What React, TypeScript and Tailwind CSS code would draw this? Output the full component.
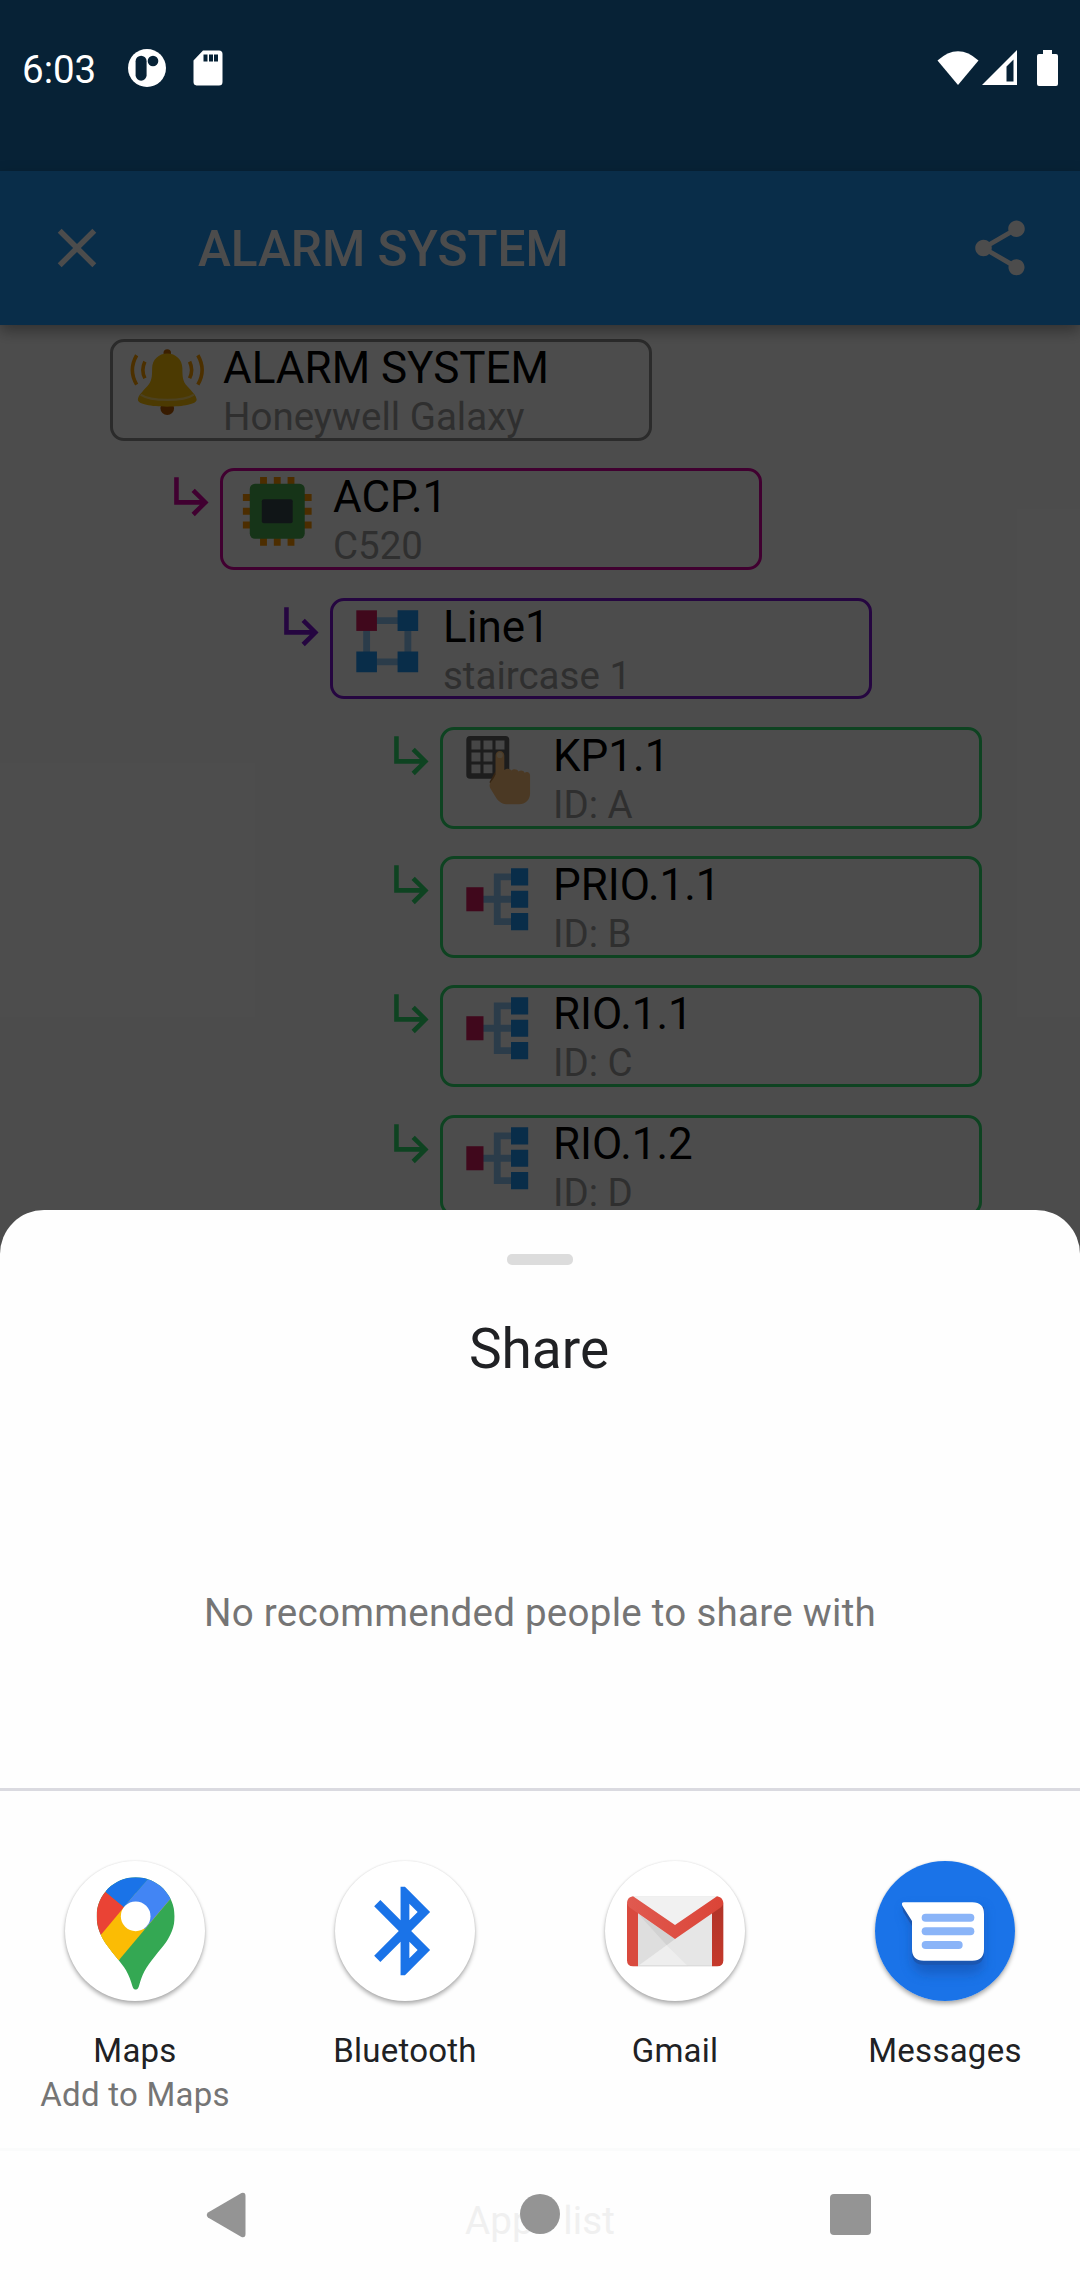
import React from "react";

type Node = {
  title: string;
  sub: string;
  icon: React.ReactNode;
  indent: string;
  border: string;
  arrow?: string;
};

function BellIcon() {
  return (
    <svg viewBox="0 0 48 48" className="size-full">
      <g fill="none" stroke="#FFA000" strokeWidth="2.1">
        <path d="M6.2 8.3Q1.2 17 6.2 25.4M11 12Q8.6 16.9 11 21.7M41.800 8.3Q46.800 17 41.800 25.4M37 12Q39.4 16.9 37 21.7" />
      </g>
      <circle cx="24" cy="7" r="2.2" fill="#C56A00" />
      <circle cx="24" cy="39" r="4" fill="#B95A00" />
      <path
        fill="#FFC107"
        d="M24 7.2c-4.9 0-8.8 3.6-8.8 8.6 0 5-.2 7.6-2.7 10.4C10 29 6.9 31.800 6.9 34.200 6.900 36.700 14.500 38.200 24 38.200s17.100-1.500 17.100-4c0-2.400-3.100-5.200-5.600-8-2.500-2.800-2.700-5.400-2.700-10.400 0-5-3.900-8.600-8.800-8.600z"
      />
      <path d="M8.500 31.200Q13 34.300 24 34.300T39.500 31.200" fill="none" stroke="#FFDB6B" strokeWidth="1.300" />
    </svg>
  );
}

function ChipIcon() {
  return (
    <svg viewBox="0 0 48 48" className="size-full">
      <path
        fill="#FF9800"
        d="M14 4h4v40h-4zM22 4h4v40h-4zM30 4h4v40h-4zM4 14h40v4H4zM4 22h40v4H4zM4 30h40v4H4z"
      />
      <rect x="8" y="8" width="32" height="32" rx="3" fill="#4CAF50" />
      <rect x="15" y="17" width="18" height="14" rx="1.200" fill="#37474F" />
    </svg>
  );
}

function LineIcon() {
  return (
    <svg viewBox="0 0 48 48" className="size-full">
      <path fill="#90CAF9" d="M10 10h28v28H10zM14 14v20h20V14z" fillRule="evenodd" />
      <path fill="#2196F3" d="M30 6h12v12H30zM6 30h12v12H6zM30 30h12v12H30z" />
      <path fill="#D81B60" d="M6 6h12v12H6z" />
    </svg>
  );
}

function KeypadIcon() {
  return (
    <svg viewBox="0 0 48 48" className="size-full">
      <rect x="6" y="4" width="25" height="25" rx="2.200" fill="#616161" />
      <path
        fill="#ECECEC"
        d="M9 6.700h5.200v5.200H9zM16 6.700h5.200v5.200H16zM23 6.700h5.200v5.200H23zM9 13.700h5.200v5.200H9zM16 13.700h5.200v5.200H16zM9 20.600h5.200v5.200H9zM16 20.600h5.200v5.200H16z"
      />
      <path fill="#B07840" d="M23 24.500l-3.600 6.500 3.600 3z" />
      <path
        fill="#FCC078"
        d="M23 15.300a2.550 2.550 0 0 1 5.100 0V24c1-1.200 3.300-1.200 4.100.2 1.200-1.200 3.400-1 4.200.5 1.300-1 3-.5 3.500.8 1.400-1 3.200-.3 3.200 1.500v10.500c0 3.700-2.800 6.300-6.300 6.300h-6.600c-3 0-5.200-1.300-6.800-3.700l-3.300-5.300c-.7-1.300-.9-2.600.2-3.900.9-1.200 2-2.500 2.700-4.400z"
      />
      <circle cx="25.500" cy="15.200" r="1.700" fill="#FFE0B2" />
    </svg>
  );
}

function TreeIcon() {
  return (
    <svg viewBox="0 0 48 48" className="size-full">
      <path fill="#90CAF9" d="M22 9h11v4h-7v9h7v4h-7v9h7v4H22V26h-7v-4h7z" />
      <path fill="#2196F3" d="M32 6h10v10H32zM32 19h10v10H32zM32 32h10v10H32z" />
      <path fill="#D81B60" d="M6 17h10v14H6z" />
    </svg>
  );
}

const nodes: Node[] = [
  { title: "ALARM SYSTEM", sub: "Honeywell Galaxy", icon: <BellIcon />, indent: "pl-[110px]", border: "border-[#8f8f8f]" },
  { title: "ACP.1", sub: "C520", icon: <ChipIcon />, indent: "pl-[165px]", border: "border-[#d800a0]", arrow: "text-[#d800a0]" },
  { title: "Line1", sub: "staircase 1", icon: <LineIcon />, indent: "pl-[275px]", border: "border-[#7e14d8]", arrow: "text-[#7e14d8]" },
  { title: "KP1.1", sub: "ID: A", icon: <KeypadIcon />, indent: "pl-[385px]", border: "border-[#2fe070]", arrow: "text-[#2fe070]" },
  { title: "PRIO.1.1", sub: "ID: B", icon: <TreeIcon />, indent: "pl-[385px]", border: "border-[#2fe070]", arrow: "text-[#2fe070]" },
  { title: "RIO.1.1", sub: "ID: C", icon: <TreeIcon />, indent: "pl-[385px]", border: "border-[#2fe070]", arrow: "text-[#2fe070]" },
  { title: "RIO.1.2", sub: "ID: D", icon: <TreeIcon />, indent: "pl-[385px]", border: "border-[#2fe070]", arrow: "text-[#2fe070]" },
];

function NodeRow({ node }: { node: Node }) {
  return (
    <div className={`flex items-start ${node.indent}`}>
      {node.arrow && (
        <svg viewBox="0 0 24 24" fill="currentColor" className={`size-[55px] shrink-0 ${node.arrow}`}>
          <path d="M19 15l-6 6-1.420-1.420L15.170 16H4V4h2v10h9.170l-3.590-3.580L13 9l6 6z" />
        </svg>
      )}
      <div className={`flex h-[101.75px] w-[542px] shrink-0 rounded-[14px] border-[3px] ${node.border}`}>
        <div className="mt-[-1px] ml-[12.5px] size-[82.5px] shrink-0">{node.icon}</div>
        <div className="ml-[15px] whitespace-nowrap">
          <div className="text-[44px] leading-[52px] text-black">{node.title}</div>
          <div className="text-[38.5px] leading-[46px] text-[#9e9e9e]">{node.sub}</div>
        </div>
      </div>
    </div>
  );
}

function StatusBar() {
  return (
    <div className="absolute inset-x-0 top-0 flex h-[135px] items-center justify-between pl-[22px] pr-[22px] text-white">
      <div className="flex items-center">
        <span className="w-[106px] text-[38.5px] leading-[46px] mt-[4px]">6:03</span>
        <svg viewBox="0 0 38 38" className="size-[38px]">
          <circle cx="19" cy="19" r="19" fill="#fff" />
          <rect x="7.600" y="6.700" width="11" height="25" rx="5.500" fill="#072236" />
          <circle cx="25" cy="12" r="5.300" fill="#072236" />
        </svg>
        <svg viewBox="0 0 30 36" className="ml-[27px] h-[36px] w-[30px]">
          <path d="M10 .5h16a3.500 3.500 0 0 1 3.500 3.500v28a3.500 3.500 0 0 1-3.500 3.500H3.500A3.500 3.500 0 0 1 .5 32V10.500z" fill="#fff" />
          <path d="M10.500 4.500h4v7h-4zM16 4.500h4v7h-4zM21 4.500h4v7h-4z" fill="#072236" />
        </svg>
      </div>
      <div className="flex items-center">
        <svg viewBox="0 0 42 34" className="h-[34px] w-[42px]">
          <path d="M.5 9.500Q21-9 41.500 9.500L21 34z" fill="#fff" />
        </svg>
        <svg viewBox="0 0 35 35" className="ml-[3px] h-[35px] w-[35px]">
          <path fillRule="evenodd" d="M35 0v35H0zM31.500 9.500L24.500 16.500V31.500h7z" fill="#fff" />
        </svg>
        <svg viewBox="0 0 21 36" className="ml-[20px] h-[36px] w-[21px]">
          <path d="M6 0h9v4h4a2 2 0 0 1 2 2v28a2 2 0 0 1-2 2H2a2 2 0 0 1-2-2V6a2 2 0 0 1 2-2h4z" fill="#fff" />
        </svg>
      </div>
    </div>
  );
}

function AppBar() {
  return (
    <div className="relative z-10 flex h-[154px] items-center bg-[#2196f3] pl-[44px] pr-[47px] text-white shadow-[0_6px_14px_rgba(0,0,0,0.35)]">
      <svg viewBox="0 0 24 24" fill="currentColor" className="size-[66px]">
        <path d="M19 6.410L17.590 5 12 10.590 6.410 5 5 6.410 10.590 12 5 17.590 6.410 19 12 13.410 17.590 19 19 17.590 13.410 12z" />
      </svg>
      <div className="mt-[2px] ml-[88px] flex-1 text-[49.5px] leading-[60px] font-medium">ALARM SYSTEM</div>
      <svg viewBox="0 0 24 24" fill="currentColor" className="size-[66px]">
        <path d="M18 16.080c-.760 0-1.440.300-1.960.770L8.910 12.700c.050-.230.090-.460.090-.700s-.040-.470-.090-.700l7.050-4.110c.540.500 1.250.810 2.040.810 1.660 0 3-1.340 3-3s-1.340-3-3-3-3 1.340-3 3c0 .240.040.470.090.700L8.040 9.810C7.500 9.310 6.790 9 6 9c-1.660 0-3 1.340-3 3s1.340 3 3 3c.790 0 1.500-.310 2.040-.810l7.120 4.160c-.050.210-.080.430-.080.650 0 1.610 1.310 2.920 2.920 2.920s2.920-1.310 2.920-2.920-1.310-2.920-2.920-2.920z" />
      </svg>
    </div>
  );
}

function MapsIcon() {
  return (
    <svg viewBox="195 242 420 420" className="size-full">
      <defs>
        <clipPath id="pin">
          <path d="M407 291C472 291 524 343 524 408C524 440 512 468 492 494C468 524 440 556 428 584C422 598 420 607 417 617Q414 628 407 628Q400 628 397 617C392 601 388 588 378 570C366 549 340 522 321 495C302 468 290 442 290 408C290 343 343 291 407 291Z" />
        </clipPath>
      </defs>
      <g clipPath="url(#pin)">
        <path fill="#34A853" d="M280 280h260v360H280z" />
        <path fill="#FBBC04" d="M303 463L407 339L511 356L357 539L280 560z" />
        <path fill="#EA4335" d="M318 336L407 408L303 463.500L270 500V300z" />
        <path fill="#FBBC04" d="M303 463L373 379.500L420 420L357 539L290 540z" />
        <path fill="#1A73E8" d="M318 336L300 280H460L442 298L371 380z" />
        <path fill="#4285F4" d="M442 298L371 380L434 447L511 356L540 320V270z" />
      </g>
      <circle cx="407" cy="408" r="44.500" fill="#fff" />
    </svg>
  );
}

function BluetoothIcon() {
  return (
    <svg viewBox="195 242 420 420" className="size-full">
      <path
        transform="translate(246.500 292.400) scale(13.200 13.300)"
        fill="#1A73E8"
        d="M17.710 7.710L12 2h-1v7.590L6.410 5 5 6.410 10.590 12 5 17.590 6.410 19 11 14.410V22h1l5.710-5.710-4.300-4.290 4.300-4.290zM13 5.830l1.880 1.880L13 9.590V5.830zm1.880 10.460L13 18.170v-3.760l1.880 1.880z"
      />
    </svg>
  );
}

function GmailIcon() {
  return (
    <svg viewBox="195 242 420 420" className="size-full">
      <defs>
        <linearGradient id="flap" x1="0" x2="1">
          <stop offset="0" stopColor="#E05A50" />
          <stop offset="1" stopColor="#DB4437" />
        </linearGradient>
        <linearGradient id="side" x1="0" x2="0" y1="0" y2="1">
          <stop offset="0" stopColor="#B03428" />
          <stop offset="1" stopColor="#C5392B" />
        </linearGradient>
      </defs>
      <path fill="#E6E6E6" d="M278 348H533V558H278z" />
      <path fill="#F1F1F1" d="M278 348H533L405 434z" />
      <path fill="#DEDEDE" d="M294 400L380 495L294 556z" />
      <path fill="#D2D2D2" d="M294 400L405 476L380 495z" />
      <path fill="#EEEEEE" d="M380 495L444 558H294z" />
      <path fill="#D9D9D9" d="M294 555H516V558H294z" />
      <path fill="#D94A3E" d="M261 368L294 385V558H279Q261 558 261 540z" />
      <path fill="url(#side)" d="M550 368L516 385V558H532Q550 558 550 540z" />
      <path fill="url(#flap)" d="M261 366Q263 350 279 348L405 434L531 348Q547 350 550 366Q550 376 543 381L405 476L268 381Q261 376 261 366z" />
    </svg>
  );
}

function MessagesIcon() {
  return (
    <svg viewBox="195 242 420 420" className="size-full">
      <defs>
        <filter id="soft" x="-50%" y="-50%" width="200%" height="200%">
          <feGaussianBlur stdDeviation="18" />
        </filter>
      </defs>
      <circle cx="405" cy="452" r="210" fill="#1A73E8" />
      <path filter="url(#soft)" opacity="0.550" fill="#174EA6" d="M282 385H520V560Q500 580 480 580H345Q306 575 306 530V440z" />
      <path fill="#1B56B0" d="M276 376L280 395L306 437V517Q306 553 341 553H487Q522 553 522 517V380z" />
      <path fill="#fff" d="M282 366H487Q522 366 522 401V506Q522 541 487 541H341Q306 541 306 506V422L277 376Q273 366 282 366z" />
      <g fill="#8AB4F8">
        <rect x="335" y="400" width="158" height="24" rx="12" />
        <rect x="335" y="441" width="158" height="24" rx="12" />
        <rect x="335" y="482" width="123" height="24" rx="12" />
      </g>
    </svg>
  );
}

const targets = [
  { name: "Maps", sub: "Add to Maps", icon: <MapsIcon /> },
  { name: "Bluetooth", sub: "", icon: <BluetoothIcon /> },
  { name: "Gmail", sub: "", icon: <GmailIcon /> },
  { name: "Messages", sub: "", icon: <MessagesIcon /> },
];

function NavBar() {
  return (
    <div className="absolute inset-x-0 bottom-0 flex h-[132px] items-start border-t-[3px] border-[#fafbfb] pt-[41px] pl-[206px]">
      <svg viewBox="0 0 40 46" className="h-[46px] w-[40px]">
        <path d="M35.500 1L2 20.500Q-.5 23 2 25.500L35.500 45Q39.500 46 39.500 42V4Q39.500 0 35.500 1z" fill="#949494" />
      </svg>
      <div className="ml-[274px] mt-[1.5px] size-[40px] rounded-full bg-[#949494]" />
      <div className="ml-[270px] mt-[2px] size-[41px] rounded-[4px] bg-[#949494]" />
    </div>
  );
}

function ShareSheet() {
  return (
    <div className="absolute inset-x-0 bottom-0 flex h-[1070px] flex-col items-center overflow-hidden rounded-t-[44px] bg-[#fefefe]">
      <div className="mt-[44px] h-[11px] w-[66px] shrink-0 rounded-[5px] bg-[#dcdcdc]" />
      <div className="mt-[52px] mr-[2px] text-[55px] leading-[64px] text-[#202124]">Share</div>
      <div className="mt-[209px] text-[38.5px] leading-[46px] tracking-[0.28px] text-[#757575]">No recommended people to share with</div>
      <div className="mt-[152px] h-[3px] w-full shrink-0 bg-[#dadae0]" />
      <div className="mt-[70px] grid w-full grid-cols-4">
        {targets.map((t) => (
          <div key={t.name} className="flex h-[303px] flex-col items-center">
            <div className="size-[140px] rounded-full bg-white shadow-[0_3px_4px_rgba(0,0,0,0.3),0_0_2px_rgba(0,0,0,0.12)]">{t.icon}</div>
            <div className="mt-[28px] text-[33px] leading-[44px] tracking-[0.25px] text-[#202124]">{t.name}</div>
            <div className="text-[33px] leading-[44px] tracking-[0.25px] text-[#757575]">{t.sub}</div>
          </div>
        ))}
      </div>
      <div className="mt-[34px] shrink-0 text-[38.5px] leading-[46px] tracking-[0.1px] text-[#f0f0f0]">Apps list</div>
    </div>
  );
}

export default function App() {
  return (
    <div className="relative h-[2280px] w-[1080px] overflow-hidden bg-white font-['Roboto',sans-serif]">
      <div className="h-[171px] bg-[#1872b4]" />
      <AppBar />
      <div className="flex flex-col gap-[27.5px] pt-[14px]">
        {nodes.map((n) => (
          <NodeRow key={n.title} node={n} />
        ))}
      </div>
      <div className="absolute inset-0 z-20 bg-black/70" />
      <div className="absolute inset-0 z-30">
        <StatusBar />
        <ShareSheet />
        <NavBar />
      </div>
    </div>
  );
}
